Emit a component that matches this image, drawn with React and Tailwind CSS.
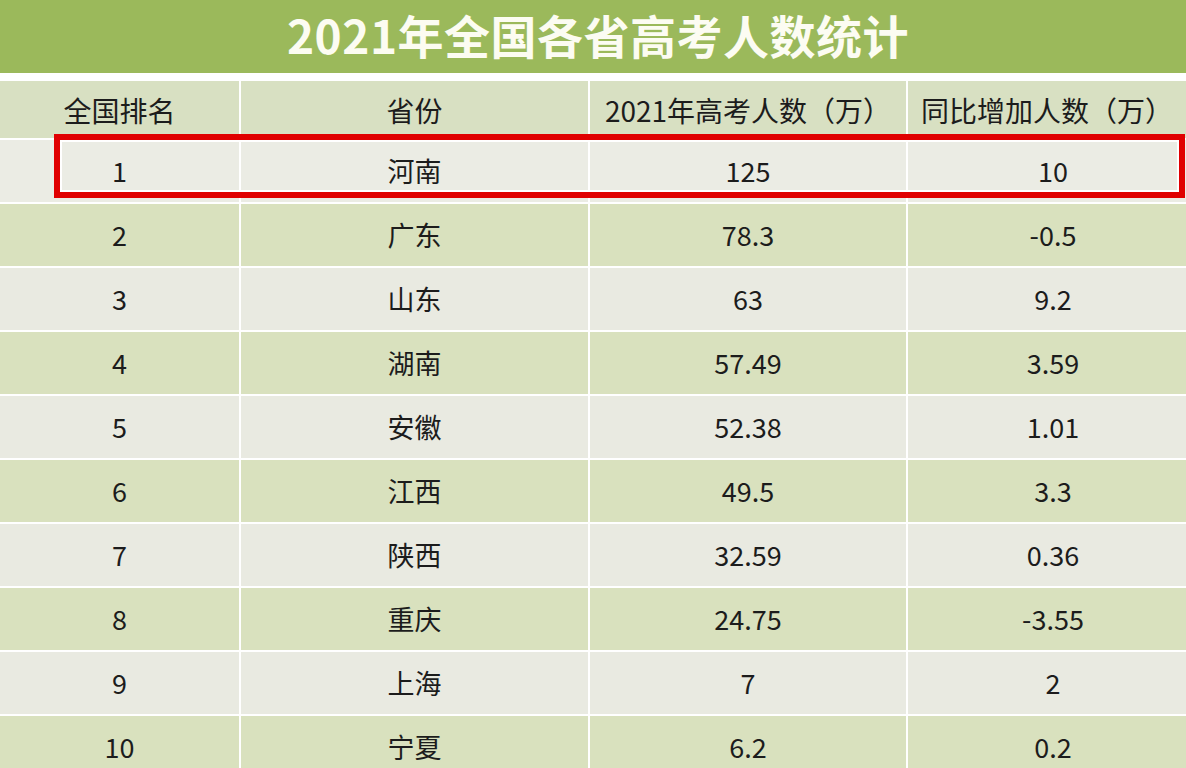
import React from "react";

const rows = [
  ["1", "河南", "125", "10"],
  ["2", "广东", "78.3", "-0.5"],
  ["3", "山东", "63", "9.2"],
  ["4", "湖南", "57.49", "3.59"],
  ["5", "安徽", "52.38", "1.01"],
  ["6", "江西", "49.5", "3.3"],
  ["7", "陕西", "32.59", "0.36"],
  ["8", "重庆", "24.75", "-3.55"],
  ["9", "上海", "7", "2"],
  ["10", "宁夏", "6.2", "0.2"],
];

const headers = ["全国排名", "省份", "2021年高考人数（万）", "同比增加人数（万）"];

const font = { fontFamily: '"Noto Sans CJK SC", "Noto Sans", sans-serif' };

export default function App() {
  return (
    <div className="relative w-[1186px] h-[768px] overflow-hidden bg-white" style={font}>
      {/* title */}
      <div className="h-[73px] bg-[#9bb95b] flex items-center justify-center pb-[6px]">
        <h1 className="text-[46px] font-bold text-[#fcfcf2] leading-[56px] tracking-[0.5px] ml-[10px]">
          2021年全国各省高考人数统计
        </h1>
      </div>

      <div className="mt-[8px] flex flex-col gap-y-[2px]">
        {/* header */}
        <div className="grid grid-cols-[239px_347px_316px_1fr] gap-x-[2px] h-[57px]">
          {headers.map((h) => (
            <div key={h} className="bg-[#d8e0c2] flex items-center justify-center text-[28px] text-[#1c1c1c]">
              {h}
            </div>
          ))}
        </div>

        {rows.map((r, i) => {
          const bg = i === 0 ? "bg-[#ebece4]" : i % 2 === 0 ? "bg-[#e9eae1]" : "bg-[#d9e1be]";
          return (
            <div key={r[0]} className="grid grid-cols-[239px_347px_316px_1fr] gap-x-[2px] h-[62px]">
              {r.map((c, j) => (
                <div
                  key={j}
                  className={`${bg} flex items-center justify-center text-[27px] text-[#1c1c1c] ${j === 3 ? "pl-[12px]" : ""}`}
                >
                  {c}
                </div>
              ))}
            </div>
          );
        })}
      </div>

      {/* highlight box around first row */}
      <div className="absolute left-[54px] top-[134px] w-[1131px] h-[64px] border-[6px] border-[#e00000] shadow-[inset_0_0_0_2px_#ffffff] pointer-events-none" />
    </div>
  );
}
